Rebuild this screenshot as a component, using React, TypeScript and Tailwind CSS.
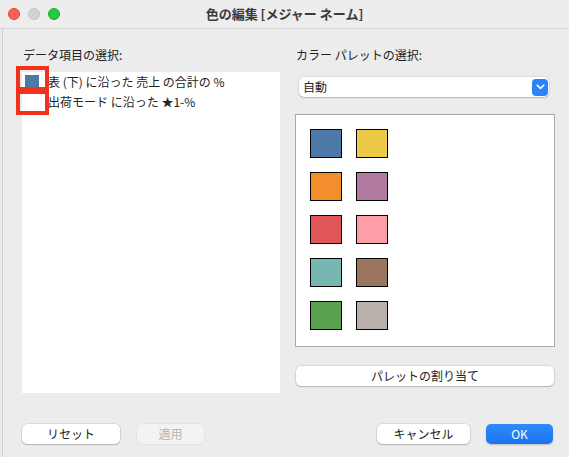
import React from 'react';

const font = { fontFamily: '"Noto Sans CJK JP", "Noto Sans", sans-serif' };

const palette = [
    '#4e79a7', '#edc948',
    '#f28e2b', '#b07aa1',
    '#e15759', '#ff9da7',
    '#76b7b2', '#9c755f',
    '#59a14f', '#bab0ac',
];

const btn = 'h-[20px] rounded-[5px] bg-white text-[12px] leading-[20px] text-center text-[#222] shadow-[0_0_0_0.5px_rgba(0,0,0,0.14),0_1px_1.5px_rgba(0,0,0,0.18)]';

export default function App() {
    return (
        <div style={font} className="relative w-[569px] h-[457px] bg-[#ececec] overflow-hidden flex flex-col text-[#222]">
            {/* タイトルバー */}
            <div className="h-[29px] shrink-0 flex items-center border-b border-[#d6d6d6] bg-[#ededed]">
                <div className="w-[80px] flex items-center gap-[8px] pl-[8px]">
                    <span className="w-[12px] h-[12px] rounded-full bg-[#fe5f57] border-[0.5px] border-[#e0443e]" />
                    <span className="w-[12px] h-[12px] rounded-full bg-[#d3d3d3] border-[0.5px] border-[#c2c2c2]" />
                    <span className="w-[12px] h-[12px] rounded-full bg-[#28c840] border-[0.5px] border-[#1aab29]" />
                </div>
                <div className="flex-1 text-center text-[13px] font-semibold text-[#3a3a3a]">色の編集 [メジャー ネーム]</div>
                <div className="w-[80px]" />
            </div>

            <div className="flex-1 ml-[2px] border-l border-[#cfcfcf] flex flex-col">
                <div className="flex pt-[18px] pl-[19px]">
                    {/* データ項目 */}
                    <div className="w-[258px]">
                        <div className="h-[16px] text-[12px] leading-[16px] pl-[1px]">データ項目の選択:</div>
                        <div className="mt-[9px] h-[321px] bg-white text-[12px]">
                            <div className="h-[20px] flex items-center">
                                <span className="ml-[3px] w-[14px] h-[14px] bg-[#4e79a7]" />
                                <span className="ml-[9px]">表 (下) に沿った 売上 の合計の %</span>
                            </div>
                            <div className="h-[20px] flex items-center">
                                <span className="ml-[3px] w-[14px] h-[14px] bg-white" />
                                <span className="ml-[9px]">出荷モード に沿った ★1-%</span>
                            </div>
                        </div>
                    </div>

                    {/* カラーパレット */}
                    <div className="ml-[15px] w-[260px]">
                        <div className="h-[16px] text-[12px] leading-[16px] pl-[1px]">カラー パレットの選択:</div>
                        <div className="mt-[14px] ml-[4px] w-[250px] h-[20px] rounded-[5px] bg-white flex items-center justify-between shadow-[0_0_0_0.5px_rgba(0,0,0,0.12),0_1px_1.5px_rgba(0,0,0,0.18)]">
                            <span className="pl-[4px] text-[12px]">自動</span>
                            <span className="mr-[1px] w-[16px] h-[17px] rounded-[4px] bg-[#2b83f6] flex items-center justify-center">
                                <svg width="9" height="6" viewBox="0 0 9 6" fill="none">
                                    <path d="M1.2 1.2 L4.5 4.4 L7.8 1.2" stroke="white" strokeWidth="1.6" strokeLinecap="round" strokeLinejoin="round" />
                                </svg>
                            </span>
                        </div>
                        <div className="mt-[17px] h-[233px] bg-white border border-[#a9a9a9] pl-[14px] pt-[14px]">
                            <div className="grid grid-cols-[32px_32px] gap-x-[14px] gap-y-[14px]">
                                {palette.map((c) => (
                                    <div key={c} className="w-[32px] h-[29px] border border-black" style={{ backgroundColor: c }} />
                                ))}
                            </div>
                        </div>
                        <div className={`${btn} mt-[19px] ml-[1px] w-[258px]`}>パレットの割り当て</div>
                    </div>
                </div>

                {/* 下部ボタン */}
                <div className="flex items-center mt-[31px] pl-[19px]">
                    <div className={`${btn} w-[98px]`}>リセット</div>
                    <div className="ml-[17px] w-[67px] h-[20px] rounded-[5px] bg-[#f3f3f3] text-[12px] leading-[20px] text-center text-[#b4b4b4] shadow-[0_0_0_0.5px_rgba(0,0,0,0.06)]">適用</div>
                    <div className={`${btn} ml-auto w-[93px]`}>キャンセル</div>
                    <div className="ml-[16px] mr-[16px] w-[67px] h-[20px] rounded-[5px] bg-gradient-to-b from-[#2d8bfa] to-[#1d74f0] text-white text-[12px] leading-[20px] text-center shadow-[0_1px_1.5px_rgba(0,0,0,0.2)]">OK</div>
                </div>
            </div>

            {/* 注釈の赤枠 */}
            <div className="absolute left-[16px] top-[66px] w-[33px] h-[25px] border-[4px] border-[#f3311c]" />
            <div className="absolute left-[16px] top-[90px] w-[33px] h-[25px] border-[4px] border-[#f3311c]" />
        </div>
    );
}
